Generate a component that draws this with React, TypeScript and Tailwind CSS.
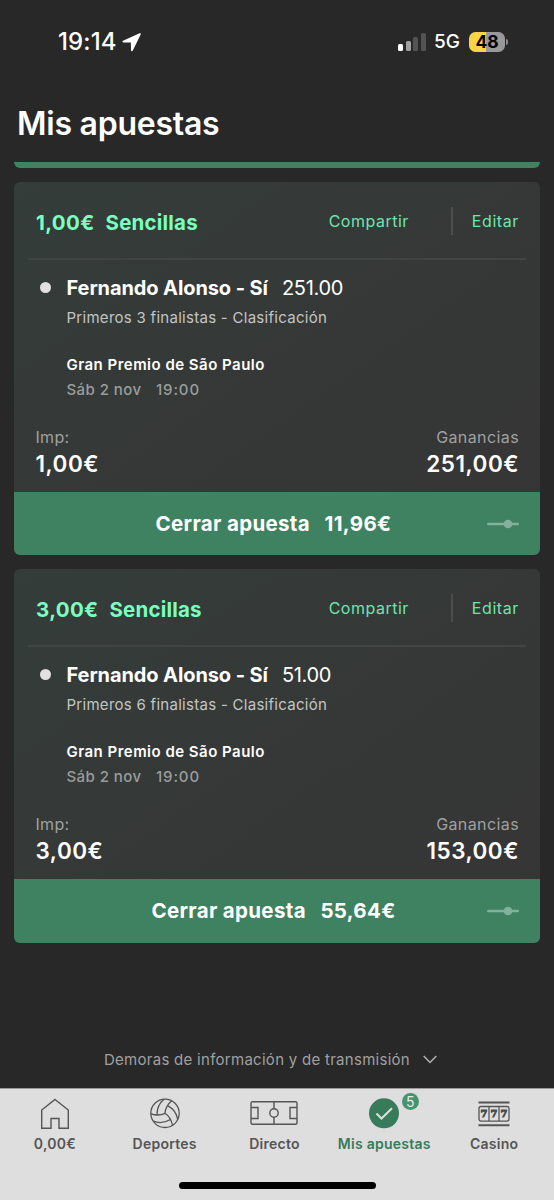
import React from "react"

type Bet = {
  stake: string
  selection: string
  odds: string
  market: string
  returns: string
  cashOut: string
}

const bets: Bet[] = [
  {
    stake: "1,00€",
    selection: "Fernando Alonso - Sí",
    odds: "251.00",
    market: "Primeros 3 finalistas - Clasificación",
    returns: "251,00€",
    cashOut: "11,96€",
  },
  {
    stake: "3,00€",
    selection: "Fernando Alonso - Sí",
    odds: "51.00",
    market: "Primeros 6 finalistas - Clasificación",
    returns: "153,00€",
    cashOut: "55,64€",
  },
]

function StatusBar() {
  return (
    <div className="flex h-[84px] items-center justify-between pl-[58px] pr-[46px]">
      <div className="flex items-center gap-[5px] text-white">
        <span className="text-[24px] font-medium leading-7 tracking-[0.1px]">19:14</span>
        <svg className="h-[19px] w-[19px]" viewBox="0 0 19 19" fill="currentColor">
          <path d="M17.6.3 1 7.7c-1 .5-.8 1.7.3 1.8l7.2.1c.3 0 .4.1.4.4l.1 7.2c0 1.2 1.3 1.4 1.8.4L18.7 1.4C19.1.5 18.5-.1 17.6.3Z" />
        </svg>
      </div>
      <div className="flex items-center">
        <div className="flex h-[18px] items-end gap-[2.7px]">
          <div className="h-[7px] w-[5px] rounded-[1.5px] bg-white" />
          <div className="h-[10px] w-[5px] rounded-[1.5px] bg-[#a0a0a0]" />
          <div className="h-[14px] w-[5px] rounded-[1.5px] bg-[#535353]" />
          <div className="h-[18px] w-[5px] rounded-[1.5px] bg-[#535353]" />
        </div>
        <span className="ml-[8px] w-[27px] text-[19px] font-medium leading-7 text-white">5G</span>
        <div className="ml-[8px] flex h-5 w-9 items-center justify-center rounded-[6.5px] bg-linear-to-r from-[#fbd345] from-48% to-[#999999] to-48% text-[17.5px] font-bold leading-5 text-black">
          48
        </div>
        <div className="ml-px h-[6px] w-[2px] rounded-r-full bg-[#8a8a8a]" />
      </div>
    </div>
  )
}

function BetCard({ bet }: { bet: Bet }) {
  return (
    <article className="h-[373.3px] overflow-hidden rounded-[6px] bg-linear-to-br from-[#343d3a] via-[#353837] to-[#363535]">
      <div className="mx-[14px] flex h-[78px] items-center border-b-2 border-[#404543] pl-2 pr-[7px]">
        <h2 className="flex flex-1 gap-[11px] pt-[5px] text-[20.5px] font-bold leading-7 tracking-[0.2px] text-[#7affbf]">
          <span className="tracking-[0.35px]">{bet.stake}</span>
          <span>Sencillas</span>
        </h2>
        <span className="pt-px text-[16px] leading-6 tracking-[0.5px] text-[#6ce5ae]">Compartir</span>
        <div className="ml-[42.5px] mr-[19px] mt-[2px] h-7 w-[1.5px] bg-[#4a4f4d]" />
        <span className="pt-px text-[16px] leading-6 tracking-[0.6px] text-[#6ce5ae]">Editar</span>
      </div>

      <div className="flex pt-[14px]">
        <div className="ml-[26px] mt-[8px] h-[11px] w-[11px] rounded-full bg-[#e0e0e0]" />
        <div className="ml-[15.5px]">
          <p className="flex gap-[14px] text-[20px] leading-7 text-white">
            <span className="font-bold tracking-[-0.1px]">{bet.selection}</span>
            <span className="tracking-[-0.3px]">{bet.odds}</span>
          </p>
          <p className="mt-1 text-[15px] leading-6 tracking-[0.28px] text-[#c3c5c4]">{bet.market}</p>
          <p className="mt-[22.5px] text-[15px] font-semibold leading-6 tracking-[0.48px] text-white">
            Gran Premio de São Paulo
          </p>
          <p className="mt-[1.5px] flex gap-[14.5px] text-[15px] font-medium leading-6 tracking-[0.42px] text-[#9b9d9c]">
            <span>Sáb 2 nov</span>
            <span className="tracking-[0.9px]">19:00</span>
          </p>
        </div>
      </div>

      <div className="mt-[23px] flex h-[67px] justify-between pl-[21.5px] pr-[21px]">
        <div>
          <p className="text-[16px] leading-6 tracking-[0.3px] text-[#9fa1a0]">Imp:</p>
          <p className="text-[22.5px] font-semibold leading-[30px] tracking-[0.5px] text-white">{bet.stake}</p>
        </div>
        <div className="text-right">
          <p className="text-[16px] leading-6 tracking-[0.4px] text-[#9fa1a0]">Ganancias</p>
          <p className="text-[22.5px] font-semibold leading-[30px] tracking-[0.5px] text-white">{bet.returns}</p>
        </div>
      </div>

      <button className="flex h-16 w-full items-center bg-[#3e8262] pl-[46px] pr-[21px] text-[20.5px] font-bold text-white">
        <span className="flex flex-1 justify-center gap-[14.5px] tracking-[0.33px]">
          <span>Cerrar apuesta</span>
          <span>{bet.cashOut}</span>
        </span>
        <svg className="h-[10px] w-[32px]" viewBox="0 0 32 10" fill="#83b19b">
          <rect y="3.7" width="32" height="2.6" rx="1.3" />
          <circle cx="21" cy="5" r="4.3" />
        </svg>
      </button>
    </article>
  )
}

function HomeIcon() {
  return (
    <svg className="h-8 w-8" viewBox="0 0 32 32" fill="none" stroke="#555" strokeWidth="1.4">
      <path d="M16 1.5 29.3 12v18.3H20V20.5h-8v9.8H2.7V12Z" />
    </svg>
  )
}

function BallIcon() {
  return (
    <svg className="h-8 w-8" viewBox="0 0 32 32" fill="none" stroke="#555" strokeWidth="1.3">
      <circle cx="16" cy="15.3" r="14.2" />
      {/* one third of the seams, turned round the centre */}
      {["rotate(0)", "rotate(120)", "rotate(240)"].map((turn) => (
        <g key={turn} transform={`translate(16 15.3) ${turn}`}>
          <path d="M0 0C-4 2-9 2.200-14.100.5" />
          <path d="M-8 1.600C-8.200-4.500-6-10-1-14.100" />
        </g>
      ))}
    </svg>
  )
}

function PitchIcon() {
  return (
    <svg className="h-8 w-12" viewBox="0 0 48 32" fill="none" stroke="#555" strokeWidth="1.4">
      <rect x="1" y="3.8" width="46" height="22.5" rx="1.5" />
      <path d="M24 3.8v7M24 19.2v7.1M1 9.5h7v11H1M47 9.5h-7v11h7" />
      <circle cx="24" cy="15" r="4.2" />
    </svg>
  )
}

function CheckIcon() {
  return (
    <svg className="h-8 w-8" viewBox="0 0 32 32" fill="none">
      <circle cx="16" cy="15.3" r="15" fill="#387b5a" />
      <path d="m8.500 15.500 5 5 10.500-10.200" stroke="#dedede" strokeWidth="2" />
    </svg>
  )
}

function SlotIcon() {
  return (
    <svg className="h-8 w-8" viewBox="0 0 32 32" fill="none" stroke="#555" strokeWidth="1.3">
      <path d="M.5 4.500h31M.5 27.300h31" strokeWidth="2" />
      <rect x="1" y="8.5" width="30" height="14.6" rx="2" />
      <path d="M11 8.500v14.600M21 8.500v14.600" />
      <g
        className="font-['DejaVu_Serif',serif] text-[10px] font-bold"
        fill="#4a4a4a"
        stroke="#4a4a4a"
        strokeWidth="0.9"
        textAnchor="middle"
      >
        <text x="6.1" y="19.4">7</text>
        <text x="16" y="19.4">7</text>
        <text x="25.9" y="19.4">7</text>
      </g>
    </svg>
  )
}

const tabs = [
  { label: "0,00€", icon: <HomeIcon /> },
  { label: "Deportes", icon: <BallIcon /> },
  { label: "Directo", icon: <PitchIcon /> },
  { label: "Mis apuestas", icon: <CheckIcon />, active: true, badge: 5 },
  { label: "Casino", icon: <SlotIcon /> },
]

function TabBar() {
  return (
    <nav className="flex h-[112px] flex-col items-center border-t border-[#9a9a9a] bg-[#dedede]">
      <ul className="grid w-[549px] grid-cols-5 self-start pt-[9px]">
        {tabs.map((tab) => (
          <li key={tab.label} className="flex flex-col items-center">
            <div className="relative">
              {tab.icon}
              {tab.badge && (
                <span className="absolute left-[33.5px] top-[-5px] flex h-[17px] w-[17px] items-center justify-center rounded-full bg-[#459470] text-[14px] leading-none text-[#e8e8e8]">
                  {tab.badge}
                </span>
              )}
            </div>
            <span
              className={
                tab.active
                  ? "mt-1 whitespace-nowrap text-[14px] font-semibold leading-5 tracking-[0.25px] text-[#387b5a]"
                  : "mt-1 whitespace-nowrap text-[14px] font-semibold leading-5 tracking-[0.25px] text-[#555555]"
              }
            >
              {tab.label}
            </span>
          </li>
        ))}
      </ul>
      <div className="mt-[28px] h-[7px] w-[197px] rounded-full bg-black" />
    </nav>
  )
}

export default function App() {
  return (
    <div className="flex h-[1200px] w-[554px] flex-col overflow-hidden bg-[#282828] font-['Inter',sans-serif]">
      <StatusBar />
      <h1 className="h-[78px] pl-[17px] pt-[19.5px] text-[32px] font-semibold leading-10 tracking-[-0.25px] text-white">
        Mis apuestas
      </h1>
      <main className="flex flex-1 flex-col px-[14px]">
        {/* bottom edge of the card scrolled under the title */}
        <div className="h-[6px] rounded-b-[6px] bg-[#3e8262]" />
        <div className="mt-[14px] flex flex-col gap-[14px]">
          {bets.map((bet) => (
            <BetCard key={bet.cashOut} bet={bet} />
          ))}
        </div>
        <div className="mt-[105px] flex items-center justify-center gap-[13px] pr-[13px] text-[15px] leading-6 tracking-[0.28px] text-[#a0a0a0]">
          <span>Demoras de información y de transmisión</span>
          <svg className="h-[9px] w-[14px]" viewBox="0 0 14 9" fill="none" stroke="#b0b0b0" strokeWidth="1.5">
            <path d="m.7 1 6.3 6.5L13.3 1" />
          </svg>
        </div>
      </main>
      <TabBar />
    </div>
  )
}
